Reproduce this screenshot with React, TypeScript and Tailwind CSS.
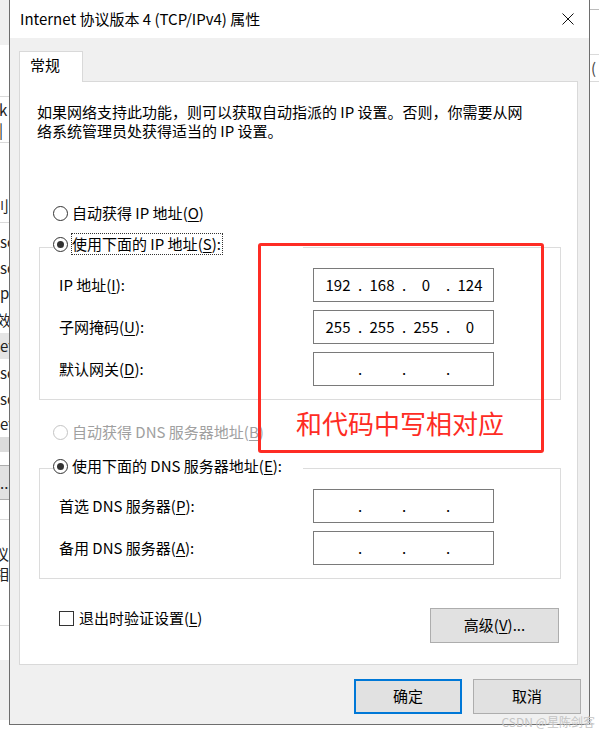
import { clsx } from 'clsx';

const cjk = "font-['Noto_Sans_CJK_SC','Noto_Sans',sans-serif]";

interface RadioProps {
  before: string;
  hot: string;
  after: string;
  checked?: boolean;
  disabled?: boolean;
  focus?: boolean;
}

function Radio({ before, hot, after, checked, disabled, focus }: RadioProps) {
  return (
    <div className="flex items-center h-[22px]">
      <span
        className={clsx(
          'w-[15px] h-[15px] rounded-full border bg-white flex items-center justify-center shrink-0',
          disabled ? 'border-[#c4c4c4]' : 'border-[#333333]'
        )}
      >
        {checked && <span className="w-[7px] h-[7px] rounded-full bg-[#333333]" />}
      </span>
      <span
        className={clsx(
          'whitespace-nowrap leading-[20px]',
          focus ? 'ml-[3px] border border-dotted border-[#333333] pr-px' : 'ml-[4px]',
          disabled ? 'text-[#a0a0a0]' : 'text-black'
        )}
      >
        {before}(<u className="underline-offset-2">{hot}</u>){after}
      </span>
    </div>
  );
}

function IpBox({ parts }: { parts: string[] }) {
  return (
    <div className="w-[181px] h-[34px] border border-[#7a7a7a] bg-white flex items-center pl-[4px] text-[15px] text-black">
      {parts.map((p, i) => (
        <div key={i} className="flex items-center">
          <span className="w-[40px] text-center">{p}</span>
          {i < 3 && <span className="w-[4px] text-center">.</span>}
        </div>
      ))}
    </div>
  );
}

function FieldRow({ before, hot, parts }: { before: string; hot: string; parts: string[] }) {
  return (
    <div className="flex items-center h-[34px] pl-[19px]">
      <span className="w-[254px] whitespace-nowrap">
        {before}(<u className="underline-offset-2">{hot}</u>):
      </span>
      <IpBox parts={parts} />
    </div>
  );
}

const empty = ['', '', '', ''];

// bits of the window that sits behind the dialog
function LeftStrip() {
  return (
    <div className="w-[9px] h-[734px] overflow-hidden flex flex-col text-[15px] leading-[20px] text-[#222] bg-white">
      <div className="h-[45px] bg-[#f0f0f0]" />
      <div className="h-[52px] border-b border-[#dadada]" />
      <div className="h-[46px] border-b border-[#dadada] flex items-center -ml-[1px]">k |</div>
      <div className="h-[80px] border-b border-[#dadada] flex items-end pb-[6px] -ml-[6px]">刂</div>
      <div className="h-[6px]" />
      <div className="h-[26px] flex items-center">sc</div>
      <div className="h-[25px] flex items-center">sc</div>
      <div className="h-[26px] flex items-center">p</div>
      <div className="h-[27px] flex items-center -ml-[4px]">效</div>
      <div className="h-[26px] flex items-center bg-[#e5e5e5]">et</div>
      <div className="h-[27px] flex items-center">sc</div>
      <div className="h-[25px] flex items-center">sc</div>
      <div className="h-[26px] flex items-center">et</div>
      <div className="h-[15px] bg-[#dcdcdc]" />
      <div className="h-[13px]" />
      <div className="h-[35px] bg-[#e1e1e1] border-y border-[#adadad] flex items-center">...</div>
      <div className="h-[20px] border-b border-[#dadada]" />
      <div className="h-[24px]" />
      <div className="h-[20px] flex items-center -ml-[6px]">议</div>
      <div className="h-[20px] flex items-center -ml-[6px]">相</div>
      <div className="h-[42px] border-b border-[#dadada]" />
      <div className="h-[34px]" />
      <div className="h-[60px] bg-[#f0f0f0]" />
    </div>
  );
}

function RightStrip() {
  return (
    <div className="w-[9px] h-[734px] overflow-hidden flex flex-col text-[15px] text-[#444] bg-white">
      <div className="h-[10px] border-b border-[#bcbcbc]" />
      <div className="h-[45px] border-b border-[#dadada]" />
      <div className="h-[27px] border-b border-[#dadada] flex items-center pl-[1px]">(</div>
    </div>
  );
}

export default function App() {
  return (
    <div className={clsx('relative w-[599px] h-[734px] bg-white flex overflow-hidden text-[15px]', cjk)}>
      <LeftStrip />

      {/* dialog */}
      <div className="w-[581px] h-[725px] border-x border-b border-[#6e6e6e] flex flex-col bg-[#f0f0f0]">
        <div className="h-[38px] bg-white flex items-center justify-between pl-[10px] pr-[15px]">
          <span className="text-black whitespace-nowrap">Internet 协议版本 4 (TCP/IPv4) 属性</span>
          <svg width="12" height="12" viewBox="0 0 12 12" className="mb-px">
            <path d="M0.5 0.5 L11.5 11.5 M11.5 0.5 L0.5 11.5" stroke="#111" strokeWidth="1" />
          </svg>
        </div>

        <div className="pl-[9px] mt-[13px]">
          <div className="relative z-10 w-[64px] h-[31px] bg-white border-x border-t border-[#d9d9d9] flex items-center pl-[10px] pb-[4px]">
            常规
          </div>

          <div className="-mt-px w-[559px] h-[584px] bg-white border border-[#d9d9d9] flex flex-col">
            <div className="mt-[20px] pl-[17px] leading-[19px] text-black whitespace-nowrap">
              <div>如果网络支持此功能，则可以获取自动指派的 IP 设置。否则，你需要从网</div>
              <div>络系统管理员处获得适当的 IP 设置。</div>
            </div>

            <div className="mt-[62px] ml-[33px]">
              <Radio before="自动获得 IP 地址" hot="O" after="" />
            </div>

            <div className="mt-[23px] ml-[19px] w-[522px] border border-[#dcdcdc] pb-[13px]">
              <div className="-mt-[15px] ml-[13px] w-[250px] bg-white">
                <Radio before="使用下面的 IP 地址" hot="S" after=":" checked focus />
              </div>
              <div className="mt-[13px] flex flex-col gap-[8px]">
                <FieldRow before="IP 地址" hot="I" parts={['192', '168', '0', '124']} />
                <FieldRow before="子网掩码" hot="U" parts={['255', '255', '255', '0']} />
                <FieldRow before="默认网关" hot="D" parts={empty} />
              </div>
            </div>

            <div className="mt-[21px] ml-[33px]">
              <Radio before="自动获得 DNS 服务器地址" hot="B" after="" disabled />
            </div>

            <div className="mt-[25px] ml-[19px] w-[522px] border border-[#dcdcdc] pb-[13px]">
              <div className="-mt-[14px] ml-[13px] w-[250px] bg-white">
                <Radio before="使用下面的 DNS 服务器地址" hot="E" after=":" checked />
              </div>
              <div className="mt-[12px] flex flex-col gap-[8px]">
                <FieldRow before="首选 DNS 服务器" hot="P" parts={empty} />
                <FieldRow before="备用 DNS 服务器" hot="A" parts={empty} />
              </div>
            </div>

            <div className="mt-[28px] flex justify-between pl-[39px] pr-[18px]">
              <div className="flex items-center h-[22px]">
                <span className="w-[15px] h-[15px] border border-[#333333] bg-white" />
                <span className="ml-[5px] whitespace-nowrap">
                  退出时验证设置(<u className="underline-offset-2">L</u>)
                </span>
              </div>
              <button className="mt-px w-[129px] h-[35px] bg-[#e1e1e1] border border-[#adadad] text-black">
                高级(<u className="underline-offset-2">V</u>)...
              </button>
            </div>
          </div>
        </div>

        <div className="mt-[14px] flex justify-end gap-[11px] pr-[8px]">
          <button className="w-[108px] h-[35px] bg-[#e1e1e1] border-2 border-[#0078d7] text-black">确定</button>
          <button className="w-[108px] h-[35px] bg-[#e1e1e1] border border-[#adadad] text-black">取消</button>
        </div>
      </div>

      <RightStrip />

      {/* red annotation drawn over the screenshot */}
      <div className="absolute left-[258px] top-[243px] w-[286px] h-[210px] border-[3px] border-[#fe2c24] rounded-[3px] flex flex-col justify-end pl-[35px] pb-[14px]">
        <span className="text-[26px] leading-[26px] text-[#fe2c24] whitespace-nowrap">和代码中写相对应</span>
      </div>

      <div className="absolute right-[4px] bottom-[5px] text-[12px] leading-[14px] text-[#c4c4c4] whitespace-nowrap">
        CSDN @星陈剑客
      </div>
    </div>
  );
}
